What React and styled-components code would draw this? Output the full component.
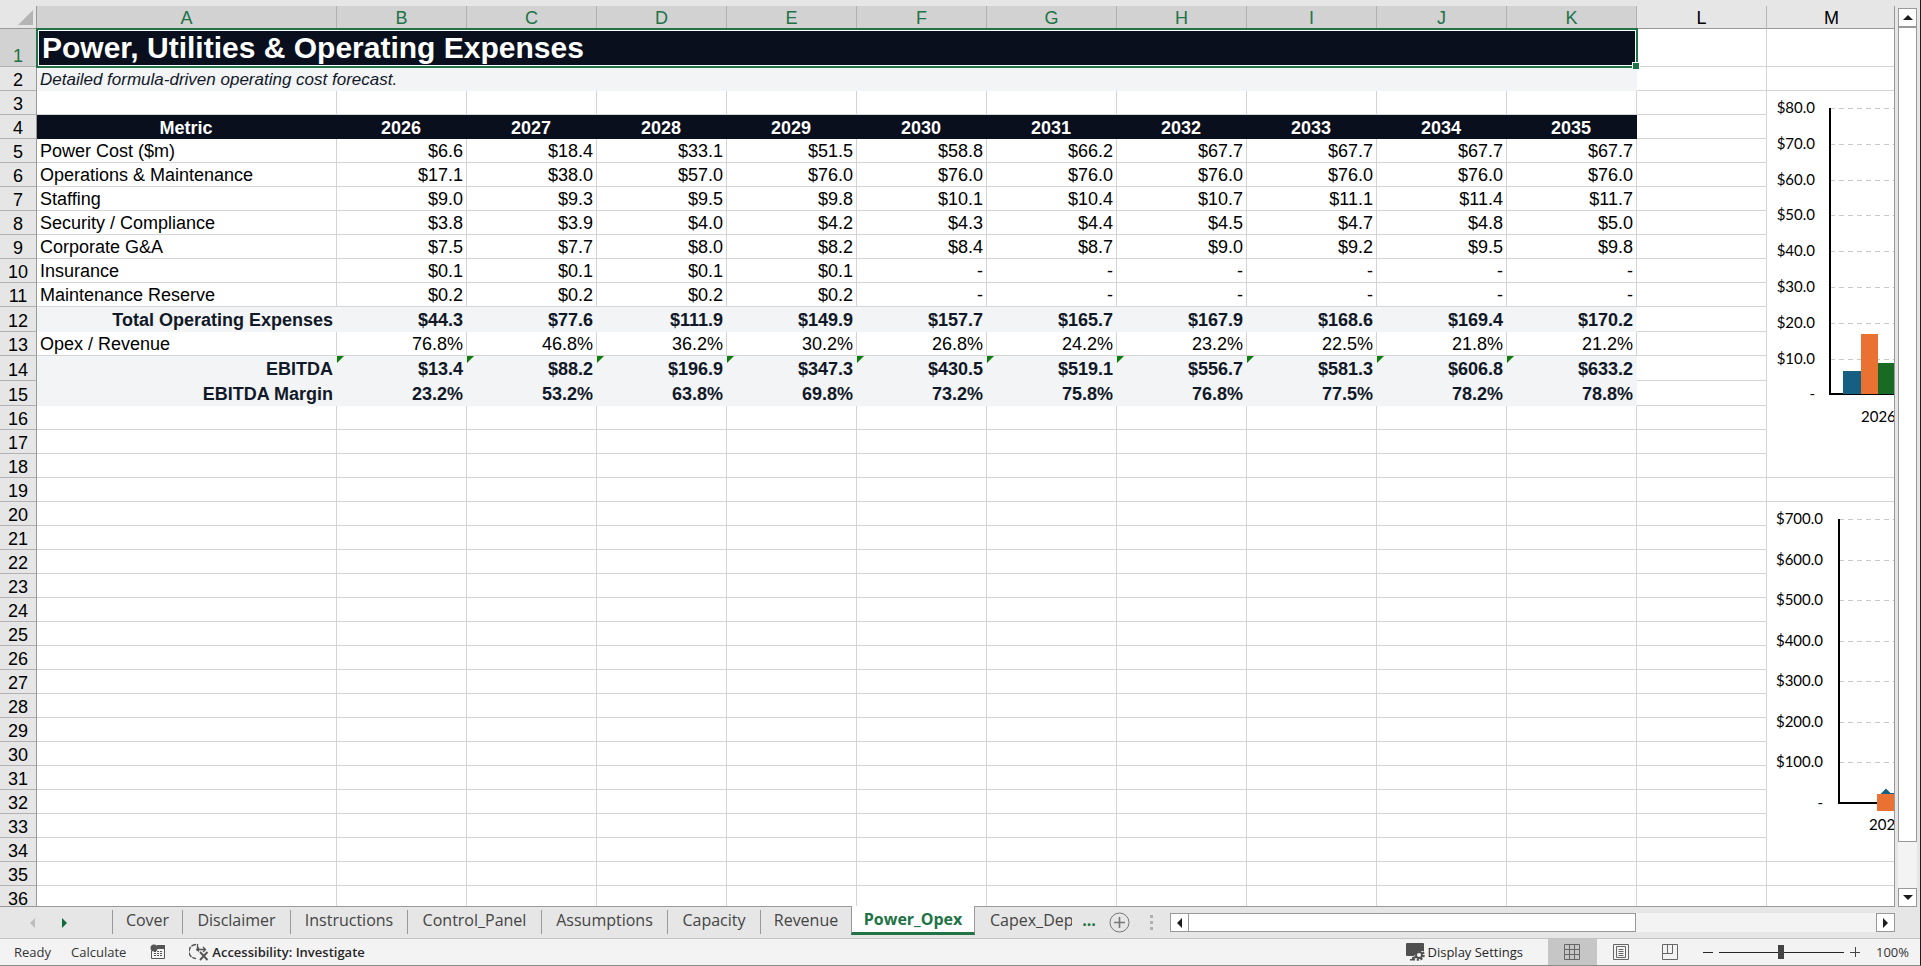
import React from 'react';
import styled, { createGlobalStyle, css } from 'styled-components';

const GlobalStyle = createGlobalStyle`
  * { box-sizing: border-box; }
  html, body { margin: 0; padding: 0; }
  body { font-family: "Liberation Sans", Arial, sans-serif; background: #e6e6e6; }
`;

const uiFont = '"Open Sans", "Noto Sans", sans-serif';
const green = '#217346';
const navy = '#0a0f1e';
const gridLine = '#d4d4d4';
const edge = '#999999';

const Page = styled.div`
  display: flex;
  flex-direction: column;
  height: 100vh;
  overflow: hidden;
  background: #e6e6e6;
  border-right: 1px solid #1c1c1c;
  border-bottom: 1px solid #8c8c8c;
`;

const Workspace = styled.div`
  flex: 1;
  display: flex;
  gap: 3px;
  min-height: 0;
  padding-right: 3px;
`;

const Sheet = styled.main`
  flex: 1;
  min-width: 0;
  overflow: hidden;
  padding-top: 6px;
  border-bottom: 1px solid ${edge};
`;

const Viewport = styled.div`
  height: 100%;
  overflow: hidden;
  border-right: 1px solid ${edge};
`;

const Grid = styled.table`
  table-layout: fixed;
  width: 1897px;
  border-collapse: separate;
  border-spacing: 0;
  font-size: 18px;
  line-height: 20px;
  color: #000;
  background: #fff;
`;

const Col = styled.col`
  width: ${(p) => p.$w}px;
`;

const Corner = styled.td`
  padding: 0 3px 3px 0;
  height: 23px;
  background: #e6e6e6;
  border-right: 1px solid ${edge};
  border-bottom: 1px solid ${edge};
  vertical-align: bottom;
  text-align: right;
  svg { display: block; margin-left: auto; }
`;

const ColHead = styled.th`
  height: 23px;
  padding: 2px 0 0;
  font-weight: 400;
  text-align: center;
  background: ${(p) => (p.$on ? '#d2d2d2' : '#e6e6e6')};
  color: ${(p) => (p.$on ? green : '#000')};
  border-right: 1px solid ${(p) => (p.$on ? '#b1b1b1' : '#b8b8b8')};
  border-bottom: 1px solid ${edge};
`;

const RowHead = styled.th`
  height: ${(p) => p.$h}px;
  padding: 0;
  font-weight: 400;
  text-align: center;
  vertical-align: bottom;
  background: ${(p) => (p.$on ? '#d2d2d2' : '#e6e6e6')};
  color: ${(p) => (p.$on ? green : '#000')};
  border-right: 1px solid ${edge};
  border-bottom: 1px solid #b1b1b1;
`;

const Cell = styled.td`
  padding: 0 3px 1px;
  white-space: nowrap;
  text-align: ${(p) => p.$align || 'right'};
  vertical-align: bottom;
  border-right: 1px solid ${gridLine};
  border-bottom: 1px solid ${gridLine};
  ${(p) => p.$band && css`
    position: relative;
    font-weight: 700;
    color: #111827;
    background: #f3f4f6;
    border-color: #f3f4f6;
  `}
`;

const ErrorFlag = styled.span`
  position: absolute;
  left: 0;
  top: 0;
  border-top: 7px solid #0a7d0a;
  border-right: 7px solid transparent;
`;

const TitleCell = styled.td`
  position: relative;
  padding: 0 5px;
  font-size: 30px;
  line-height: 34px;
  font-weight: 700;
  color: #fff;
  background: ${navy};
  outline: 2px solid ${green};
  outline-offset: -1px;
  box-shadow: inset 0 0 0 2px #fff;
`;

const FillHandle = styled.span`
  position: absolute;
  right: -2px;
  bottom: -2px;
  width: 6px;
  height: 6px;
  background: ${green};
  outline: 1px solid #fff;
`;

const NoteCell = styled.td`
  padding: 0 3px 1px;
  vertical-align: bottom;
  font-size: 17px;
  font-style: italic;
  color: #111827;
  background: #f3f4f6;
`;

const YearHead = styled.th`
  padding: 0 4px 1px 2px;
  font-weight: 700;
  text-align: center;
  vertical-align: bottom;
  color: #fff;
  background: ${navy};
`;

const ChartCell = styled.td`
  padding: 0;
  vertical-align: top;
  background: #fff;
  border-bottom: 1px solid ${gridLine};
  svg { display: block; }
  text { font-family: Lato, sans-serif; font-size: 15px; fill: #000; }
`;

const VScroll = styled.div`
  display: flex;
  flex-direction: column;
  width: 19px;
  margin-top: 8px;
  background: #f3f3f3;
`;

const ArrowButton = styled.button`
  flex: none;
  display: grid;
  place-items: center;
  width: 19px;
  height: 19px;
  padding: 0;
  background: #fff;
  border: 1px solid ${edge};
`;

const VThumb = styled.div`
  flex: 0 1 815px;
  background: #fff;
  border: 1px solid ${edge};
`;

const Spacer = styled.div`
  flex: 1;
`;

const TabBar = styled.nav`
  flex: none;
  display: flex;
  align-items: flex-start;
  height: 32px;
  padding-right: 25px;
  border-bottom: 1px solid #c3c3c3;
  font-family: ${uiFont};
`;

const TabArrows = styled.div`
  display: flex;
  align-items: center;
  gap: 27px;
  width: 112px;
  height: 31px;
  padding-left: 30px;
`;

const PlainButton = styled.button`
  display: flex;
  padding: 0;
  border: 0;
  background: none;
`;

const Tab = styled.button`
  flex: none;
  width: ${(p) => p.$w}px;
  height: 24px;
  margin-top: 3px;
  padding: 0 0 5px;
  border: 0;
  border-left: 1px solid ${edge};
  background: none;
  font: 400 16px/20px ${uiFont};
  color: #444;
  text-align: center;
`;

const ActiveTab = styled(Tab)`
  height: 29px;
  margin-top: -1px;
  padding: 2px 0 3px;
  position: relative;
  background: #fff;
  border-right: 1px solid ${edge};
  border-bottom: 3px solid ${green};
  color: ${green};
  font-weight: 700;
`;

const CutTab = styled(Tab)`
  width: 97px;
  padding-left: 15px;
  border-left: 0;
  text-align: left;
  overflow: hidden;
`;

const MoreTabs = styled(Tab)`
  width: 34px;
  border-left: 0;
  font-weight: 700;
  color: ${green};
`;

const TabTools = styled.div`
  display: flex;
  align-items: center;
  gap: 20px;
  height: 31px;
  width: 64px;
  padding-left: 3px;
`;

const HScroll = styled.div`
  flex: 1;
  display: flex;
  margin-top: 6px;
  background: #f3f3f3;
`;

const HThumb = styled.div`
  flex: 0 1 448px;
  margin-left: -1px;
  background: #fff;
  border: 1px solid ${edge};
`;

const StatusBar = styled.footer`
  flex: none;
  display: flex;
  align-items: center;
  height: 26px;
  padding: 0 11px 0 14px;
  background: #f3f3f3;
  font: 400 13px/18px ${uiFont};
  color: #333;
`;

const StatusText = styled.span`
  margin-right: ${(p) => p.$gap}px;
`;

const StatusButton = styled.button`
  display: flex;
  align-items: center;
  gap: 2px;
  height: 26px;
  padding: 0;
  border: 0;
  background: none;
  font: inherit;
  font-weight: ${(p) => (p.$strong ? 600 : 400)};
  color: #262626;
  margin-right: ${(p) => p.$gap || 0}px;
`;

const ViewButton = styled.button`
  display: grid;
  place-items: center;
  width: 49px;
  height: 26px;
  padding: 0;
  border: 0;
  background: ${(p) => (p.$on ? '#c6c6c6' : 'none')};
`;

const ZoomGroup = styled.div`
  display: flex;
  align-items: center;
  gap: 6px;
  margin: 0 16px 0 8px;
`;

const ZoomSlider = styled.input`
  appearance: none;
  width: 125px;
  height: 14px;
  margin: 0;
  background: linear-gradient(#262626, #262626) center / 100% 1px no-repeat;
  &::-webkit-slider-thumb {
    appearance: none;
    width: 6px;
    height: 14px;
    background: #444;
  }
`;

const letters = ['A', 'B', 'C', 'D', 'E', 'F', 'G', 'H', 'I', 'J', 'K', 'L', 'M'];
const years = ['2026', '2027', '2028', '2029', '2030', '2031', '2032', '2033', '2034', '2035'];

const data = {
  5: { label: 'Power Cost ($m)', v: ['$6.6', '$18.4', '$33.1', '$51.5', '$58.8', '$66.2', '$67.7', '$67.7', '$67.7', '$67.7'] },
  6: { label: 'Operations & Maintenance', v: ['$17.1', '$38.0', '$57.0', '$76.0', '$76.0', '$76.0', '$76.0', '$76.0', '$76.0', '$76.0'] },
  7: { label: 'Staffing', v: ['$9.0', '$9.3', '$9.5', '$9.8', '$10.1', '$10.4', '$10.7', '$11.1', '$11.4', '$11.7'] },
  8: { label: 'Security / Compliance', v: ['$3.8', '$3.9', '$4.0', '$4.2', '$4.3', '$4.4', '$4.5', '$4.7', '$4.8', '$5.0'] },
  9: { label: 'Corporate G&A', v: ['$7.5', '$7.7', '$8.0', '$8.2', '$8.4', '$8.7', '$9.0', '$9.2', '$9.5', '$9.8'] },
  10: { label: 'Insurance', v: ['$0.1', '$0.1', '$0.1', '$0.1', '-', '-', '-', '-', '-', '-'] },
  11: { label: 'Maintenance Reserve', v: ['$0.2', '$0.2', '$0.2', '$0.2', '-', '-', '-', '-', '-', '-'] },
  12: { label: 'Total Operating Expenses', band: true, v: ['$44.3', '$77.6', '$111.9', '$149.9', '$157.7', '$165.7', '$167.9', '$168.6', '$169.4', '$170.2'] },
  13: { label: 'Opex / Revenue', v: ['76.8%', '46.8%', '36.2%', '30.2%', '26.8%', '24.2%', '23.2%', '22.5%', '21.8%', '21.2%'] },
  14: { label: 'EBITDA', band: true, flag: true, v: ['$13.4', '$88.2', '$196.9', '$347.3', '$430.5', '$519.1', '$556.7', '$581.3', '$606.8', '$633.2'] },
  15: { label: 'EBITDA Margin', band: true, v: ['23.2%', '53.2%', '63.8%', '69.8%', '73.2%', '75.8%', '76.8%', '77.5%', '78.2%', '78.8%'] },
};

const heightOf = (n) => (n === 1 ? 38 : [12, 14, 15].includes(n) ? 25 : 24);

const tabs = [
  ['Cover', 70], ['Disclaimer', 108], ['Instructions', 117], ['Control_Panel', 134],
  ['Assumptions', 126], ['Capacity', 93], ['Revenue', 91],
];

function Axis({ x, top, step, labels, labelX }) {
  const bottom = Math.round(top + step * (labels.length - 1));
  return (
    <>
      {labels.map((t, i) => {
        const y = Math.round(top + i * step);
        return (
          <g key={t}>
            <text x={labelX} y={y + 5} textAnchor="end">{t}</text>
            {i < labels.length - 1 && (
              <path d={`M${x} ${y + 0.5}H130`} stroke="#c9c9c9" strokeDasharray="5 4" />
            )}
          </g>
        );
      })}
      <path d={`M${x} ${top}V${bottom}H130`} fill="none" stroke="#000" strokeWidth="2" />
    </>
  );
}

function CostChart() {
  return (
    <svg width="130" height="386" role="img" aria-label="Operating cost by year">
      <Axis x={63} top={17} step={35.8} labelX={48}
        labels={['$80.0', '$70.0', '$60.0', '$50.0', '$40.0', '$30.0', '$20.0', '$10.0', '-']} />
      <rect x="76" y="280" width="18" height="23" fill="#156082" />
      <rect x="94" y="243" width="17" height="60" fill="#e97132" />
      <rect x="111" y="272" width="18" height="31" fill="#196b24" />
      <text x="94" y="331">2026</text>
    </svg>
  );
}

function EarningsChart() {
  return (
    <svg width="130" height="359" role="img" aria-label="EBITDA by year">
      <Axis x={72} top={17} step={40.5} labelX={56}
        labels={['$700.0', '$600.0', '$500.0', '$400.0', '$300.0', '$200.0', '$100.0', '-']} />
      <path d="M119 288l5 5l-5 5l-5-5zM119 292H130" fill="#156082" stroke="#156082" strokeWidth="2" />
      <rect x="110" y="292" width="18" height="17" fill="#e97132" />
      <text x="102" y="328">2026</text>
    </svg>
  );
}

function RowTail({ n }) {
  return (
    <>
      <Cell />
      {n === 3 && <ChartCell rowSpan={16}><CostChart /></ChartCell>}
      {n === 20 && <ChartCell rowSpan={15}><EarningsChart /></ChartCell>}
      {(n < 3 || n === 19 || n > 34) && <Cell />}
    </>
  );
}

function SheetRow({ n }) {
  const row = data[n];
  return (
    <tr>
      <RowHead scope="row" $h={heightOf(n)} $on={n === 1}>{n}</RowHead>
      {n === 1 && <TitleCell colSpan={11}>Power, Utilities &amp; Operating Expenses<FillHandle /></TitleCell>}
      {n === 2 && <NoteCell colSpan={11}>Detailed formula-driven operating cost forecast.</NoteCell>}
      {n === 4 && ['Metric', ...years].map((y) => <YearHead key={y} scope="col">{y}</YearHead>)}
      {row && <Cell $align={row.band ? 'right' : 'left'} $band={row.band}>{row.label}</Cell>}
      {row && row.v.map((v, i) => (
        <Cell key={years[i]} $band={row.band}>{row.flag && <ErrorFlag />}{v}</Cell>
      ))}
      {!row && ![1, 2, 4].includes(n) && letters.slice(0, 11).map((l) => <Cell key={l} />)}
      <RowTail n={n} />
    </tr>
  );
}

const arrows = { up: 'M0 5L5 0L10 5Z', down: 'M0 0L5 5L10 0Z', left: 'M5 0L0 5L5 10Z', right: 'M0 0L5 5L0 10Z' };

function Arrow({ dir, color = '#1c1c1c' }) {
  const tall = dir === 'left' || dir === 'right';
  return (
    <svg width={tall ? 5 : 10} height={tall ? 10 : 5} aria-hidden="true">
      <path d={arrows[dir]} fill={color} />
    </svg>
  );
}

function MacroIcon() {
  return (
    <svg width="16" height="16" viewBox="0 0 16 16" fill="none" stroke="#555" aria-hidden="true">
      <path d="M1.5 7V14.5H14.5V1" />
      <path d="M7 1h8v4H7z" fill="#555" stroke="none" />
      <circle cx="4" cy="4" r="3.500" fill="#555" stroke="none" />
      <path d="M4 7.500h9M4 9.500h9M4 11.500h9" strokeDasharray="2 1" />
    </svg>
  );
}

function AccessibilityIcon() {
  return (
    <svg width="21" height="18" viewBox="0 0 21 18" fill="none" stroke="#555" aria-hidden="true">
      <path d="M7 1.500A7 7 0 0 0 7 15.500" strokeWidth="1.500" strokeDasharray="5 1" />
      <path d="M8.500 1v7M7 6.500h9M10 4.500l-2 2l2 2M14 4l2.500 2.500l-2.500 2.500" strokeWidth="1.300" />
      <path d="M11 9l7.500 8M18.500 9l-7.500 8" strokeWidth="1.900" />
    </svg>
  );
}

function DisplayIcon() {
  return (
    <svg width="19" height="18" viewBox="0 0 19 18" aria-hidden="true">
      <path d="M1 0h16a1 1 0 0 1 1 1v7h-6l-4 5H1a1 1 0 0 1-1-1V1a1 1 0 0 1 1-1zM6 14h2v2h1v1.500H4V16h2z" fill="#505050" />
      <circle cx="13" cy="12" r="4.500" fill="none" stroke="#505050" strokeWidth="2.500" strokeDasharray="2 1.500" />
      <circle cx="13" cy="12" r="3" fill="#f3f3f3" stroke="#505050" strokeWidth="1.800" />
    </svg>
  );
}

const views = [
  ['Normal', 'M.5.5h15v15H.5zM.5 5.500h15M.5 10.500h15M5.500.5v15M10.500.5v15'],
  ['Page Layout', 'M.5.5h15v15H.5zM3.500 2.500h9v11h-9zM5.500 5.500h5M5.500 7.500h5M5.500 9.500h5M5.500 11.500h5'],
  ['Page Break Preview', 'M.5.5h15v15H.5zM.5 9.500h10V.5M5.500.5v9'],
];

export default function App() {
  return (
    <Page>
      <GlobalStyle />
      <Workspace>
        <Sheet>
          <Viewport>
            <Grid>
              <colgroup>
                <Col $w={37} />
                {letters.map((l) => <Col key={l} $w={l === 'A' ? 300 : 130} />)}
              </colgroup>
              <thead>
                <tr>
                  <Corner>
                    <svg width="15" height="15" aria-hidden="true"><path d="M15 0V15H0Z" fill="#b4b4b4" /></svg>
                  </Corner>
                  {letters.map((l, i) => <ColHead key={l} scope="col" $on={i < 11}>{l}</ColHead>)}
                </tr>
              </thead>
              <tbody>
                {Array.from({ length: 36 }, (_, i) => <SheetRow key={i} n={i + 1} />)}
              </tbody>
            </Grid>
          </Viewport>
        </Sheet>
        <VScroll>
          <ArrowButton aria-label="Scroll up"><Arrow dir="up" /></ArrowButton>
          <VThumb />
          <Spacer />
          <ArrowButton aria-label="Scroll down"><Arrow dir="down" /></ArrowButton>
        </VScroll>
      </Workspace>
      <TabBar>
        <TabArrows>
          <PlainButton aria-label="Previous sheets"><Arrow dir="left" color="#bdbdbd" /></PlainButton>
          <PlainButton aria-label="Next sheets"><Arrow dir="right" color="#0b6b3a" /></PlainButton>
        </TabArrows>
        {tabs.map(([t, w]) => <Tab key={t} $w={w}>{t}</Tab>)}
        <ActiveTab $w={124}>Power_Opex</ActiveTab>
        <CutTab>Capex_Dep</CutTab>
        <MoreTabs aria-label="More sheets">...</MoreTabs>
        <TabTools>
          <PlainButton aria-label="New sheet">
            <svg width="21" height="21" aria-hidden="true" fill="none" stroke="#777">
              <circle cx="10.500" cy="10.500" r="9.500" />
              <path d="M5 10.500h11M10.500 5v11" strokeWidth="1.600" />
            </svg>
          </PlainButton>
          <svg width="3" height="15" aria-hidden="true" fill="#b0b0b0">
            <path d="M0 0h3v3H0zM0 6h3v3H0zM0 12h3v3H0z" />
          </svg>
        </TabTools>
        <HScroll>
          <ArrowButton aria-label="Scroll left"><Arrow dir="left" /></ArrowButton>
          <HThumb />
          <Spacer />
          <ArrowButton aria-label="Scroll right"><Arrow dir="right" /></ArrowButton>
        </HScroll>
      </TabBar>
      <StatusBar>
        <StatusText $gap={20}>Ready</StatusText>
        <StatusText $gap={24}>Calculate</StatusText>
        <StatusButton aria-label="Record macro" $gap={23}><MacroIcon /></StatusButton>
        <StatusButton $strong><AccessibilityIcon />Accessibility: Investigate</StatusButton>
        <Spacer />
        <StatusButton $gap={25}><DisplayIcon />Display Settings</StatusButton>
        {views.map(([name, d], i) => (
          <ViewButton key={name} aria-label={name} $on={i === 0}>
            <svg width="16" height="16" aria-hidden="true"><path d={d} fill="none" stroke="#666" /></svg>
          </ViewButton>
        ))}
        <ZoomGroup>
          <PlainButton aria-label="Zoom out">
            <svg width="10" height="10" aria-hidden="true"><path d="M0 5.500h10" stroke="#262626" /></svg>
          </PlainButton>
          <ZoomSlider type="range" min="0" max="100" defaultValue="50" aria-label="Zoom" />
          <PlainButton aria-label="Zoom in">
            <svg width="10" height="10" aria-hidden="true"><path d="M0 5.500h10M5.500 0v10" stroke="#444" /></svg>
          </PlainButton>
        </ZoomGroup>
        <span>100%</span>
      </StatusBar>
    </Page>
  );
}
